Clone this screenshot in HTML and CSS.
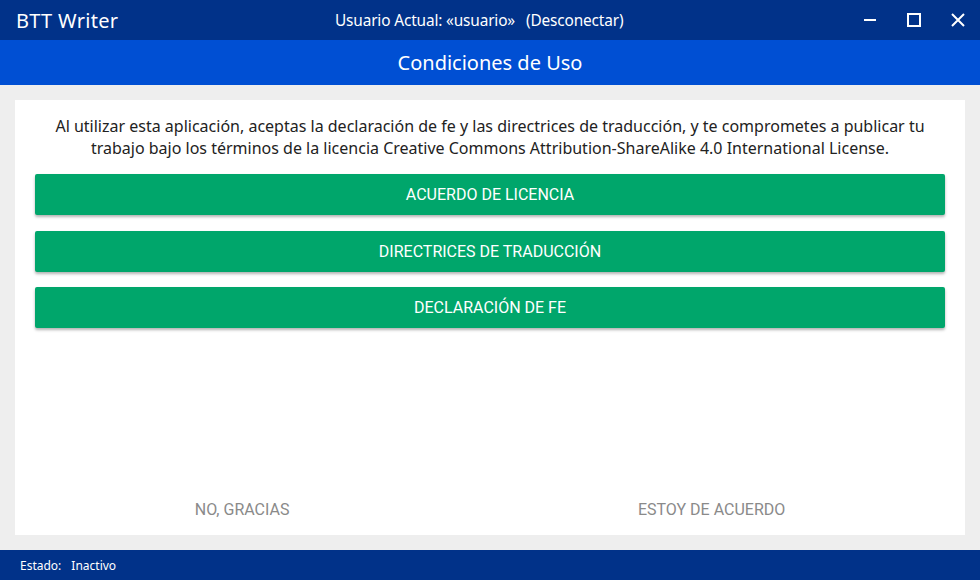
FILE: index.html
```html
<!DOCTYPE html>
<html lang="es">
<head>
<meta charset="utf-8">
<title>BTT Writer</title>
<link rel="stylesheet" href="styles.css">
</head>
<body>
<div class="app">
  <header class="titlebar">
    <div class="app-name">BTT Writer</div>
    <div class="user">Usuario Actual: «usuario»<span class="logout">(Desconectar)</span></div>
    <div class="controls">
      <span class="ctl">
        <svg width="14" height="14" viewBox="0 0 14 14"><rect x="1" y="6" width="12" height="2" fill="#fff"/></svg>
      </span>
      <span class="ctl">
        <svg width="14" height="14" viewBox="0 0 14 14"><rect x="1" y="1" width="12" height="12" fill="none" stroke="#fff" stroke-width="2"/></svg>
      </span>
      <span class="ctl">
        <svg width="14" height="14" viewBox="0 0 14 14"><path d="M1 1 L13 13 M13 1 L1 13" stroke="#fff" stroke-width="2"/></svg>
      </span>
    </div>
  </header>
  <div class="subbar">Condiciones de Uso</div>
  <main class="content">
    <section class="card">
      <p class="intro">Al utilizar esta aplicación, aceptas la declaración de fe y las directrices de traducción, y te comprometes a publicar tu trabajo bajo los términos de la licencia Creative Commons Attribution-ShareAlike 4.0 International License.</p>
      <div class="buttons">
        <button class="btn">ACUERDO DE LICENCIA</button>
        <button class="btn">DIRECTRICES DE TRADUCCIÓN</button>
        <button class="btn">DECLARACIÓN DE FE</button>
      </div>
      <div class="actions">
        <button class="flat">NO, GRACIAS</button>
        <button class="flat">ESTOY DE ACUERDO</button>
      </div>
    </section>
  </main>
  <footer class="status">
    <span class="label">Estado:</span><span>Inactivo</span>
  </footer>
</div>
</body>
</html>
```
FILE: styles.css
```css
* { box-sizing: border-box; }
html, body { margin: 0; padding: 0; }
body {
  width: 980px;
  height: 580px;
  overflow: hidden;
  font-family: "Noto Sans", "Open Sans", sans-serif;
  background: #eeeeee;
}
.app {
  display: flex;
  flex-direction: column;
  height: 580px;
}
.titlebar {
  height: 40px;
  background: #013289;
  color: #fff;
  display: flex;
  align-items: center;
}
.app-name {
  font-size: 20px;
  padding-left: 16px;
  letter-spacing: 0.3px;
  width: 335px;
}
.user {
  font-size: 15.4px;
  letter-spacing: -0.15px;
}
.logout {
  margin-left: 11px;
}
.controls {
  margin-left: auto;
  display: flex;
  align-items: center;
  gap: 30px;
  padding-right: 15px;
}
.ctl {
  display: flex;
  width: 14px;
  height: 14px;
}
.subbar {
  height: 45px;
  background: #004fd3;
  color: #fff;
  font-size: 20px;
  display: flex;
  align-items: center;
  justify-content: center;
}
.content {
  flex: 1;
  padding: 15px;
}
.card {
  background: #fff;
  height: 435px;
  display: flex;
  flex-direction: column;
  padding: 15px 20px 0 20px;
}
.intro {
  margin: 0;
  text-align: center;
  font-size: 16px;
  line-height: 22px;
  color: #222;
}
.buttons {
  display: flex;
  flex-direction: column;
  gap: 15.5px;
  margin-top: 15px;
}
.btn {
  height: 41px;
  border: none;
  border-radius: 2px;
  background: #00a66b;
  color: #fff;
  font-family: Roboto, sans-serif;
  font-size: 16px;
  box-shadow: 0 2px 3px rgba(0,0,0,0.3);
}
.actions {
  margin-top: auto;
  margin-left: -14.5px;
  margin-right: -14.5px;
  height: 52px;
  display: flex;
  justify-content: space-around;
  align-items: center;
}
.flat {
  border: none;
  background: none;
  color: #8a8a8a;
  font-family: Roboto, sans-serif;
  font-size: 16px;
  padding: 0;
}
.status {
  height: 30px;
  background: #013289;
  color: #fff;
  font-size: 12px;
  display: flex;
  align-items: center;
  padding-left: 20px;
}
.status .label {
  margin-right: 10px;
}
```
